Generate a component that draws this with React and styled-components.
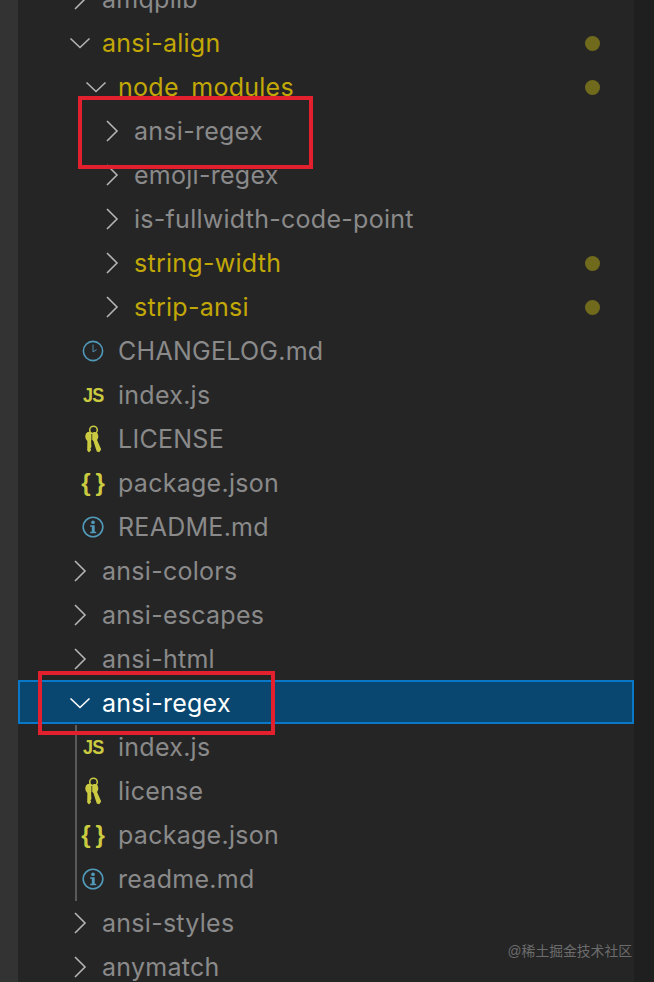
import styled, { createGlobalStyle } from "styled-components"

const GlobalStyle = createGlobalStyle`
  html, body {
    margin: 0;
    padding: 0;
    background: #1f1f1f;
  }
`

const Screen = styled.div`
  position: relative;
  width: 654px;
  height: 982px;
  overflow: hidden;
  display: flex;
  background: #1f1f1f;
  font-family: Inter, "Liberation Sans", sans-serif;
`
const Gutter = styled.div`
  width: 18px;
  background: #333333;
`
const Tree = styled.div`
  width: 616px;
  height: 982px;
  background: #252526;
`
const List = styled.div`
  margin-top: -23px;
`
const Row = styled.div`
  position: relative;
  isolation: isolate;
  height: 44px;
  display: flex;
  align-items: center;
  padding-left: ${p => 48 + (p.$level - 1) * 16}px;
  padding-right: 34px;
  font-size: 25px;
  letter-spacing: 0.27px;
  color: ${p => (p.$selected ? "#ffffff" : p.$changed ? "#c2a806" : "#8a8a8a")};

  &::before {
    content: "";
    display: ${p => (p.$selected ? "block" : "none")};
    position: absolute;
    z-index: -1;
    inset: -1px 0 1px 0;
    box-sizing: border-box;
    background: #094771;
    border: 2px solid #0a78c8;
  }
`
const Twisty = styled.span`
  width: 28px;
  margin-right: 8px;
  display: flex;
  justify-content: center;
  color: ${p => (p.$selected ? "#ffffff" : "#b4b4b4")};
`
const FileIcon = styled.span`
  width: 22px;
  margin-right: 14px;
  display: flex;
  justify-content: center;
  align-items: center;
`
const JsMark = styled.span`
  font-family: "Liberation Sans", sans-serif;
  font-size: 20px;
  font-weight: 700;
  letter-spacing: -1px;
  transform: scaleX(0.9);
  color: #cbcb41;
`
const Braces = styled.span`
  font-family: "Liberation Sans", sans-serif;
  font-size: 24px;
  font-weight: 700;
  letter-spacing: 5px;
  margin-right: -5px;
  color: #cbcb41;
`
const Label = styled.span`
  flex: 1;
  white-space: nowrap;
`
const Dot = styled.span`
  width: 15px;
  height: 15px;
  border-radius: 50%;
  background: #6f6a1c;
`
const Group = styled.div`
  position: relative;

  &::before {
    content: "";
    position: absolute;
    left: 57px;
    top: 0;
    width: 1.5px;
    height: 176px;
    background: #5a5a5a;
  }
`
const RedBox = styled.div`
  position: absolute;
  box-sizing: border-box;
  left: ${p => p.$x}px;
  top: ${p => p.$y}px;
  width: ${p => p.$w}px;
  height: ${p => p.$h}px;
  border: 4px solid #e2202e;
`
const Watermark = styled.div`
  position: absolute;
  right: 22px;
  top: 943px;
  font-family: "Liberation Sans", "Noto Sans CJK SC", sans-serif;
  font-size: 13.8px;
  line-height: 18px;
  color: #6c6c6c;
`

const Chevron = ({ open }) => (
  <svg width="22" height="22" viewBox="0 0 22 22" fill="none" stroke="currentColor" strokeWidth="1.6">
    {open ? <path d="M1.5 6.5 L11 15.5 L20.5 6.5" /> : <path d="M6 1 L16 11 L6 21" />}
  </svg>
)

const ClockIcon = () => (
  <svg width="24" height="24" viewBox="0 0 24 24" fill="none" stroke="#519aba">
    <circle cx="12" cy="12" r="10.5" strokeWidth="1.7" />
    <path d="M12 5 V13 L16 10.5" strokeWidth="1" />
  </svg>
)

const InfoIcon = () => (
  <svg width="26" height="26" viewBox="0 0 26 26" fill="none">
    <circle cx="13" cy="13" r="11.6" stroke="#519aba" strokeWidth="1.9" />
    <circle cx="13" cy="7.4" r="2.2" fill="#519aba" />
    <path d="M9.6 11 H15 V18.6 H16.8 V20.4 H9.6 V18.6 H11.6 V12.8 H9.6 Z" fill="#519aba" />
  </svg>
)

const KeysIcon = () => (
  <svg width="18" height="28" viewBox="0 0 18 28" fill="none">
    <circle cx="9.5" cy="5" r="3.8" stroke="#cbcb41" strokeWidth="1.5" />
    <ellipse cx="5.2" cy="11.5" rx="3.9" ry="4.8" fill="#cbcb41" />
    <path d="M3.4 14 H7 L7.4 22 L6.4 23.5 L7.2 25 L5 27.6 L3.2 25.6 Z" fill="#cbcb41" />
    <ellipse cx="10.6" cy="11.5" rx="3.7" ry="4.6" fill="#cbcb41" />
    <path d="M9 14.5 L12.4 13.6 L17.2 24.4 L15.2 27.2 L12.8 26.4 L11.8 23.4 Z" fill="#cbcb41" />
    <path d="M7.8 9 V16" stroke="#252526" strokeWidth="0.8" />
  </svg>
)

const icons = {
  clock: <ClockIcon />,
  js: <JsMark>JS</JsMark>,
  keys: <KeysIcon />,
  json: <Braces>{"{}"}</Braces>,
  info: <InfoIcon />,
}

const TreeRow = ({ level, name, folder, open, icon, changed, selected }) => (
  <Row $level={level} $changed={changed} $selected={selected}>
    {folder ? (
      <Twisty $selected={selected}>
        <Chevron open={open} />
      </Twisty>
    ) : (
      <FileIcon>{icons[icon]}</FileIcon>
    )}
    <Label>{name}</Label>
    {changed && <Dot />}
  </Row>
)

const before = [
  { level: 1, name: "amqplib", folder: true },
  { level: 1, name: "ansi-align", folder: true, open: true, changed: true },
  { level: 2, name: "node_modules", folder: true, open: true, changed: true },
  { level: 3, name: "ansi-regex", folder: true },
  { level: 3, name: "emoji-regex", folder: true },
  { level: 3, name: "is-fullwidth-code-point", folder: true },
  { level: 3, name: "string-width", folder: true, changed: true },
  { level: 3, name: "strip-ansi", folder: true, changed: true },
  { level: 2, name: "CHANGELOG.md", icon: "clock" },
  { level: 2, name: "index.js", icon: "js" },
  { level: 2, name: "LICENSE", icon: "keys" },
  { level: 2, name: "package.json", icon: "json" },
  { level: 2, name: "README.md", icon: "info" },
  { level: 1, name: "ansi-colors", folder: true },
  { level: 1, name: "ansi-escapes", folder: true },
  { level: 1, name: "ansi-html", folder: true },
  { level: 1, name: "ansi-regex", folder: true, open: true, selected: true },
]

const children = [
  { level: 2, name: "index.js", icon: "js" },
  { level: 2, name: "license", icon: "keys" },
  { level: 2, name: "package.json", icon: "json" },
  { level: 2, name: "readme.md", icon: "info" },
]

const after = [
  { level: 1, name: "ansi-styles", folder: true },
  { level: 1, name: "anymatch", folder: true },
]

export default function App() {
  return (
    <Screen>
      <GlobalStyle />
      <Gutter />
      <Tree>
        <List>
          {before.map((r, i) => <TreeRow key={i} {...r} />)}
          <Group>
            {children.map((r, i) => <TreeRow key={i} {...r} />)}
          </Group>
          {after.map((r, i) => <TreeRow key={i} {...r} />)}
        </List>
      </Tree>
      <RedBox $x={78} $y={96} $w={235} $h={73} />
      <RedBox $x={38} $y={671} $w={237} $h={64} />
      <Watermark>@稀土掘金技术社区</Watermark>
    </Screen>
  )
}
